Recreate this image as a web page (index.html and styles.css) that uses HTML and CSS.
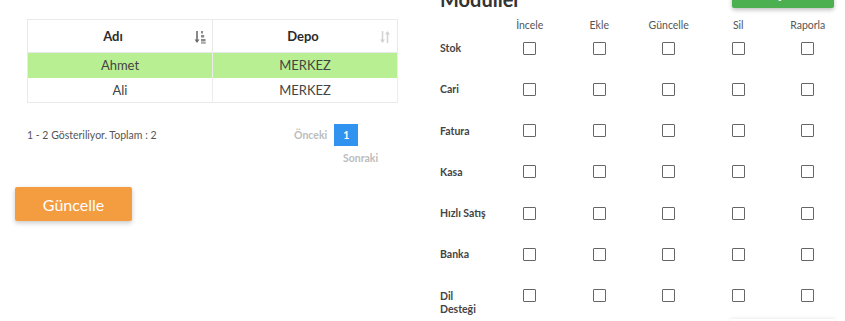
FILE: index.html
```html
<!DOCTYPE html>
<html lang="tr">
<head>
<meta charset="utf-8">
<title>Kullanıcı Yetkileri</title>
<link rel="stylesheet" href="styles.css">
</head>
<body>
<div class="page">
  <section class="left">
    <table class="grid">
      <thead>
        <tr>
          <th class="th-name"><span class="th-label">Adı</span>
            <svg class="sort" width="12" height="14" viewBox="0 0 12 14">
              <path d="M3 1v11" stroke="#6d6d6d" stroke-width="1.6"/>
              <path d="M0.5 9.5L3 13l2.5-3.5z" fill="#6d6d6d"/>
              <rect x="7" y="1" width="2" height="2.5" fill="#8a8a8a"/>
              <rect x="7" y="5" width="3.2" height="2.5" fill="#8a8a8a"/>
              <rect x="7" y="9" width="4.5" height="2.5" fill="#8a8a8a"/>
              <rect x="7" y="12.3" width="4.8" height="1.3" fill="#8a8a8a"/>
            </svg>
          </th>
          <th class="th-depo"><span class="th-label">Depo</span>
            <svg class="sort" width="12" height="14" viewBox="0 0 12 14">
              <path d="M3.5 1v11" stroke="#d3d3d3" stroke-width="1.6"/>
              <path d="M1 9.5L3.5 13 6 9.5z" fill="#d3d3d3"/>
              <path d="M8.5 13V2" stroke="#d3d3d3" stroke-width="1.6"/>
              <path d="M6 4.5L8.5 1 11 4.5z" fill="#d3d3d3"/>
            </svg>
          </th>
        </tr>
      </thead>
      <tbody>
        <tr class="selected"><td>Ahmet</td><td>MERKEZ</td></tr>
        <tr><td>Ali</td><td>MERKEZ</td></tr>
      </tbody>
    </table>

    <div class="pager">
      <div class="info">1 - 2 Gösteriliyor. Toplam : 2</div>
      <div class="pages">
        <span class="page-link prev">Önceki</span>
        <span class="page-link current">1</span>
        <span class="page-link next">Sonraki</span>
      </div>
    </div>

    <button class="btn-update" type="button">Güncelle</button>
  </section>

  <section class="right">
    <div class="right-head">
      <h2 class="title">Modüller</h2>
      <button class="btn-save" type="button">Kaydet</button>
    </div>
    <div class="perm">
      <div class="cell"></div>
      <div class="cell col-h">İncele</div>
      <div class="cell col-h">Ekle</div>
      <div class="cell col-h">Güncelle</div>
      <div class="cell col-h">Sil</div>
      <div class="cell col-h">Raporla</div>

      <div class="row-l">Stok</div>
      <div class="cell"><span class="cb"></span></div><div class="cell"><span class="cb"></span></div><div class="cell"><span class="cb"></span></div><div class="cell"><span class="cb"></span></div><div class="cell"><span class="cb"></span></div>

      <div class="row-l">Cari</div>
      <div class="cell"><span class="cb"></span></div><div class="cell"><span class="cb"></span></div><div class="cell"><span class="cb"></span></div><div class="cell"><span class="cb"></span></div><div class="cell"><span class="cb"></span></div>

      <div class="row-l">Fatura</div>
      <div class="cell"><span class="cb"></span></div><div class="cell"><span class="cb"></span></div><div class="cell"><span class="cb"></span></div><div class="cell"><span class="cb"></span></div><div class="cell"><span class="cb"></span></div>

      <div class="row-l">Kasa</div>
      <div class="cell"><span class="cb"></span></div><div class="cell"><span class="cb"></span></div><div class="cell"><span class="cb"></span></div><div class="cell"><span class="cb"></span></div><div class="cell"><span class="cb"></span></div>

      <div class="row-l">Hızlı Satış</div>
      <div class="cell"><span class="cb"></span></div><div class="cell"><span class="cb"></span></div><div class="cell"><span class="cb"></span></div><div class="cell"><span class="cb"></span></div><div class="cell"><span class="cb"></span></div>

      <div class="row-l">Banka</div>
      <div class="cell"><span class="cb"></span></div><div class="cell"><span class="cb"></span></div><div class="cell"><span class="cb"></span></div><div class="cell"><span class="cb"></span></div><div class="cell"><span class="cb"></span></div>

      <div class="row-l">Dil<br>Desteği</div>
      <div class="cell"><span class="cb"></span></div><div class="cell"><span class="cb"></span></div><div class="cell"><span class="cb"></span></div><div class="cell"><span class="cb"></span></div><div class="cell"><span class="cb"></span></div>
    </div>
    <div class="next-btn"></div>
  </section>
</div>
</body>
</html>
```

FILE: styles.css
```css
* { box-sizing: border-box; }
html, body { margin: 0; padding: 0; background: #fff; }
body {
  font-family: Lato, "Noto Sans", sans-serif;
  color: #333;
  overflow: hidden;
  width: 845px;
  height: 321px;
}
.page {
  display: flex;
  width: 845px;
  height: 321px;
  overflow: hidden;
}
.left {
  width: 420px;
  flex: none;
  padding-left: 27px;
}
.grid {
  margin-top: 19px;
  width: 371px;
  border-collapse: collapse;
  border: 1px solid #e9e9e9;
  font-size: 13px;
}
.grid th {
  position: relative;
  height: 33px;
  font-weight: 700;
  color: #2b2b2b;
  text-align: center;
  border-right: 1px solid #e9e9e9;
  border-bottom: 1px solid #e9e9e9;
  width: 50%;
  padding: 0;
}
.grid th.th-name { padding-right: 14px; }
.grid th.th-depo { padding-right: 4px; }
.grid th .sort {
  position: absolute;
  right: 6px;
  top: 10px;
}
.grid td {
  height: 25px;
  text-align: center;
  color: #444;
  padding: 0;
  border-right: 1px solid #ececec;
}
.grid tr.selected td { background: #b9ef93; }
.pager {
  display: flex;
  margin-top: 21px;
  align-items: flex-start;
}
.info {
  font-size: 10.5px;
  color: #555;
  width: 261px;
  line-height: 22px;
}
.pages {
  display: flex;
  flex-wrap: wrap;
  width: 100px;
  font-size: 10.5px;
  font-weight: 700;
}
.page-link {
  color: #bcbcbc;
  line-height: 22px;
}
.prev { padding: 0 7px 0 6px; }
.current {
  background: #2f93ef;
  color: #fff;
  width: 24px;
  text-align: center;
}
.next {
  margin-left: 55px;
  line-height: 24px;
}
.btn-update {
  display: block;
  margin: 17px 0 0 -12px;
  width: 117px;
  height: 34px;
  border: none;
  border-radius: 2px;
  background: #f39c40;
  color: #fff;
  font-family: Lato, "Open Sans", sans-serif;
  font-size: 16px;
  box-shadow: 0 2px 5px rgba(0,0,0,0.22);
}
.right {
  flex: 1;
  position: relative;
  padding-left: 20px;
}
.right-head {
  display: flex;
  justify-content: space-between;
  align-items: flex-start;
  margin-top: -13px;
  height: 30px;
}
.title {
  margin: 0;
  font-size: 20px;
  font-weight: 700;
  color: #333;
  line-height: 24px;
}
.btn-save {
  margin-right: 11px;
  margin-top: -9px;
  width: 102px;
  height: 30px;
  border: none;
  border-radius: 2px;
  background: #4caf50;
  color: #fff;
  font-size: 14px;
  box-shadow: 0 2px 4px rgba(0,0,0,0.25);
}
.perm {
  display: grid;
  grid-template-columns: 55px repeat(5, 69.5px);
  grid-auto-rows: 41.3px;
  grid-template-rows: 26px;
  margin-top: -3px;
}
.cell {
  display: flex;
  justify-content: center;
  align-items: flex-start;
}
.col-h {
  font-size: 10.5px;
  color: #555;
  align-items: center;
  margin-top: -4px;
}
.row-l {
  font-size: 10.5px;
  font-weight: 700;
  color: #444;
  line-height: 13px;
  padding-top: 2px;
}
.cb {
  display: block;
  width: 13px;
  height: 13px;
  margin-top: 1.5px;
  border: 1.5px solid #666;
  border-radius: 1px;
}
.next-btn {
  position: absolute;
  right: 10px;
  top: 319px;
  width: 105px;
  height: 30px;
  background: #fff;
  box-shadow: 0 -1px 3px rgba(0,0,0,0.08);
}
```
